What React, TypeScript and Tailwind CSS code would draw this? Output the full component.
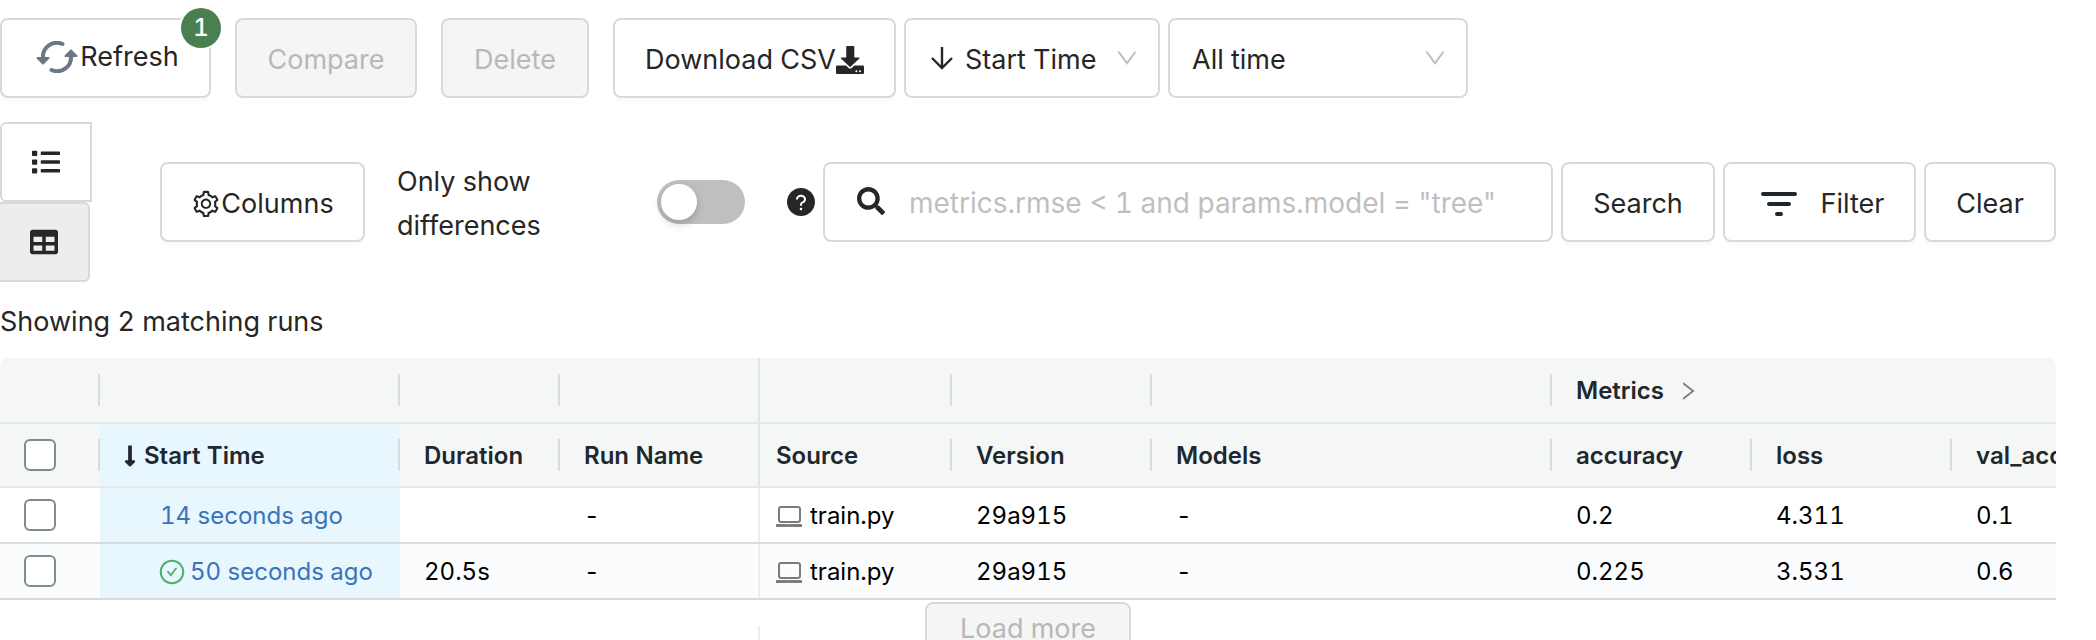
import React from "react";
import { FaList, FaTable, FaSearch, FaLongArrowAltDown } from "react-icons/fa";
import { AiOutlineSetting, AiOutlineDown, AiOutlineRight, AiOutlineCheckCircle, AiFillQuestionCircle } from "react-icons/ai";

const buttonBase = "shrink-0 rounded-lg border-2 border-[#d9d9d9] flex items-center whitespace-nowrap";
const buttonActive = "h-20 justify-center pt-1 bg-white shadow-[0_4px_0_rgba(0,0,0,0.016)]";
const buttonDisabled = "justify-center pt-1 bg-[#f5f5f5] text-[#b8b8b8]";

function RefreshIcon() {
  return (
    <svg viewBox="-1 0 42 32" className="h-8 w-[42px]" fill="none" stroke="#6b7785" strokeWidth="4" strokeLinecap="round" strokeLinejoin="round" aria-hidden="true">
      <path d="M25.500 3 A14 14 0 0 0 6 17" />
      <path d="M14.500 29 A14 14 0 0 0 34 15" />
      <path d="M0.500 17h11l-5.500 5.500z M28.500 15h11l-5.500 -5.500z" fill="#6b7785" strokeWidth="2" />
    </svg>
  );
}

function DownloadIcon() {
  return (
    <svg viewBox="0 0 28 28" className="size-7" fill="currentColor" aria-hidden="true">
      <path d="M11 0h6.500a0.800 0.800 0 0 1 0.800 0.800V11.500h4.700a0.600 0.600 0 0 1 0.400 1L14.600 20.700a0.600 0.600 0 0 1-0.900 0L5 12.500a0.600 0.600 0 0 1 0.400-1h4.800V0.800A0.800 0.800 0 0 1 11 0z" />
      <path d="M1.300 19.600h8.700l2.600 2.500a2.200 2.200 0 0 0 3.100 0l2.600-2.500h8.400a1.300 1.300 0 0 1 1.300 1.300v5.800a1.300 1.300 0 0 1-1.300 1.300H1.300A1.300 1.300 0 0 1 0 26.700v-5.800a1.300 1.300 0 0 1 1.300-1.300z" />
      <circle cx="20.400" cy="25.200" r="1" fill="#fff" />
      <circle cx="24" cy="25.200" r="1" fill="#fff" />
    </svg>
  );
}

function SortArrow() {
  return (
    <svg viewBox="0 0 22 24" className="h-6 w-[22px]" fill="none" stroke="currentColor" strokeWidth="2.400" aria-hidden="true">
      <path d="M11 1v21M1 12l10 10 10-10" />
    </svg>
  );
}

function LaptopIcon() {
  return (
    <svg viewBox="0 0 26 22" className="h-[22px] w-[26px]" fill="none" stroke="#7b7b7b" strokeWidth="2" aria-hidden="true">
      <rect x="3" y="1" width="21" height="15" rx="2" />
      <path d="M1 19.500h24" strokeWidth="3" strokeLinecap="round" />
      <path d="M11.500 19h3" stroke="#999" strokeWidth="1" />
    </svg>
  );
}

function FilterIcon() {
  return (
    <svg viewBox="0 0 36 24" className="h-6 w-9" fill="none" stroke="#1f272d" strokeWidth="4" strokeLinecap="round" aria-hidden="true">
      <path d="M2 2h32M8 12h20M16 22h4" />
    </svg>
  );
}

function Toolbar() {
  return (
    <div className="flex items-start pt-[18px]">
      <button className={`${buttonBase} relative mr-6 h-20 w-[211px] justify-center bg-white pb-0.5 pl-1 shadow-[0_4px_0_rgba(0,0,0,0.016)]`}>
        <RefreshIcon />
        <span className="ml-0.5">Refresh</span>
        <span className="absolute -top-3 -right-3 flex size-10 items-center justify-center rounded-full bg-[#4a7f52] text-2xl font-medium text-white shadow-[0_0_0_2px_#fff]">1</span>
      </button>
      <button disabled className={`${buttonBase} ${buttonDisabled} mr-6 h-20 w-[182px]`}>Compare</button>
      <button disabled className={`${buttonBase} ${buttonDisabled} mr-6 h-20 w-[148px]`}>Delete</button>
      <button className={`${buttonBase} ${buttonActive} mr-2 w-[283px]`}>
        Download CSV
        <DownloadIcon />
      </button>
      <button aria-haspopup="listbox" className={`${buttonBase} mr-2 h-20 w-[256px] bg-white pr-[18px] pl-[25px]`}>
        <SortArrow />
        <span className="ml-3 flex-1 pt-1 text-left">Start Time</span>
        <AiOutlineDown className="size-[26px] text-[#bfbfbf]" />
      </button>
      <button aria-haspopup="listbox" className={`${buttonBase} h-20 w-[300px] bg-white pr-[18px] pl-[22px]`}>
        <span className="flex-1 pt-1 text-left">All time</span>
        <AiOutlineDown className="size-[26px] text-[#bfbfbf]" />
      </button>
    </div>
  );
}

function SearchRow() {
  return (
    <div className="mt-6 flex items-center">
      <div className="mr-[68px] flex w-[92px] shrink-0 flex-col items-start">
        <button aria-label="List view" className="flex h-20 w-full items-center justify-center rounded-l-md border-2 border-[#d9d9d9] bg-white">
          <FaList className="size-7" />
        </button>
        <button aria-label="Table view" className="flex h-20 w-[90px] items-center justify-center rounded-r-md border-2 border-l-0 border-[#d9d9d9] bg-[#ededed]">
          <FaTable className="size-7" />
        </button>
      </div>
      <button className={`${buttonBase} ${buttonActive} mr-8 w-[205px]`}>
        <AiOutlineSetting className="size-[30px]" />
        Columns
      </button>
      <label htmlFor="differences" className="mr-[60px] w-[200px] shrink-0 pt-1 leading-[44px]">
        Only show
        <br />
        differences
      </label>
      <input
        id="differences"
        type="checkbox"
        role="switch"
        className="mr-10 h-11 w-[88px] shrink-0 appearance-none rounded-full bg-[#bfbfbf] p-1 before:block before:size-9 before:rounded-full before:bg-white before:shadow-[0_4px_8px_rgba(0,35,11,0.2)] checked:bg-[#2272b4] checked:before:ml-11"
      />
      <AiFillQuestionCircle className="mr-1.5 size-8 shrink-0" />
      <div className="mr-2 flex h-20 min-w-0 flex-1 items-center rounded-lg border-2 border-[#d9d9d9] px-8 pb-0.5">
        <FaSearch className="mr-6 size-7 shrink-0" />
        <input
          aria-label="Search runs"
          placeholder={'metrics.rmse < 1 and params.model = "tree"'}
          className="min-w-0 flex-1 bg-transparent pt-1 text-[28px] outline-none placeholder:text-[#bfbfbf]"
        />
      </div>
      <button className={`${buttonBase} ${buttonActive} mr-2 w-[154px]`}>Search</button>
      <button className={`${buttonBase} ${buttonActive} mr-2 w-[193px] pl-1.5`}>
        <FilterIcon />
        <span className="ml-6">Filter</span>
      </button>
      <button className={`${buttonBase} ${buttonActive} w-[132px]`}>Clear</button>
    </div>
  );
}

const columns = [
  { key: "start", label: "Start Time" },
  { key: "duration", label: "Duration" },
  { key: "name", label: "Run Name" },
  { key: "source", label: "Source" },
  { key: "version", label: "Version" },
  { key: "models", label: "Models" },
  { key: "accuracy", label: "accuracy" },
  { key: "loss", label: "loss" },
  { key: "val", label: "val_accuracy" },
];

const runs = [
  { start: "14 seconds ago", done: false, duration: "", name: "-", source: "train.py", version: "29a915", models: "-", accuracy: "0.2", loss: "4.311", val: "0.1" },
  { start: "50 seconds ago", done: true, duration: "20.5s", name: "-", source: "train.py", version: "29a915", models: "-", accuracy: "0.225", loss: "3.531", val: "0.6" },
];

const checkbox = "block size-8 appearance-none rounded-md border-2 border-[#7f8c8d] bg-white checked:bg-[#2272b4]";

function HeaderCell({ label, divider = "short", sorted = false, chevron = false }: { label?: string; divider?: "short" | "full" | "none"; sorted?: boolean; chevron?: boolean }) {
  const edge = divider === "full" ? "border-r-2 border-[#e2e6e6]" : "";
  return (
    <div className={`flex h-full items-center ${edge}`}>
      <span className="flex flex-1 items-center pt-0.5">
        {sorted && <FaLongArrowAltDown className="mr-0.5 -ml-1.5 size-6" />}
        {label}
        {chevron && <AiOutlineRight className="ml-3 size-6 text-[#7b7b7b]" />}
      </span>
      {divider === "short" && <span className="h-8 w-0.5 bg-[#d9dcde]" />}
    </div>
  );
}

function RunsTable() {
  return (
    <div className="mt-[14px] overflow-hidden rounded-t-lg text-2xl">
      <table className="w-[2152px] table-fixed border-separate border-spacing-0 text-left">
        <colgroup>
          <col className="w-[100px]" />
          <col className="w-[300px]" />
          <col className="w-40" />
          <col className="w-[200px]" />
          <col className="w-48" />
          <col className="w-[200px]" />
          <col className="w-[400px]" />
          <col className="w-[200px]" />
          <col className="w-[200px]" />
          <col className="w-[200px]" />
        </colgroup>
        <thead className="bg-[#f5f7f7] text-[#20272e]">
          <tr className="h-[66px]">
            {[0, 1, 2, 3, 4, 5, 6].map((i) => (
              <td key={i} className="h-[66px] border-b-2 border-[#e6e9e9] p-0">
                <HeaderCell divider={i === 3 ? "full" : "short"} />
              </td>
            ))}
            <th colSpan={3} className="h-[66px] border-b-2 border-[#e6e9e9] p-0 pl-6 font-semibold">
              <HeaderCell label="Metrics" divider="none" chevron />
            </th>
          </tr>
          <tr>
            <th className="h-16 border-b-2 border-[#e6e9e9] p-0 pl-6">
              <div className="flex h-full items-center justify-between">
                <input type="checkbox" aria-label="Select all runs" className={checkbox} />
                <span className="h-8 w-0.5 bg-[#d9dcde]" />
              </div>
            </th>
            {columns.map((c) => (
              <th
                key={c.key}
                className={`h-16 border-b-2 border-[#e6e9e9] p-0 font-semibold ${c.key === "source" ? "pl-4" : "pl-6"} ${c.key === "start" ? "bg-[#e8f6fe]" : ""}`}
              >
                <HeaderCell label={c.label} sorted={c.key === "start"} divider={c.key === "name" ? "full" : "short"} />
              </th>
            ))}
          </tr>
        </thead>
        <tbody className="text-black">
          {runs.map((run) => {
            const frame = "h-14 border-b-2 border-[#d9dcde] p-0 whitespace-nowrap";
            const cell = `${frame} pt-0.5 pl-6`;
            return (
              <tr key={run.start} className="even:bg-[#fbfcfe]">
                <td className={`${frame} pl-6`}>
                  <input type="checkbox" aria-label={`Select run from ${run.start}`} className={checkbox} />
                </td>
                <td className={`${cell} bg-[#e8f6fe]`}>
                  <a href="#run" className={`flex items-center text-[#3b73b9] ${run.done ? "pl-[34px]" : "pl-9"}`}>
                    {run.done && <AiOutlineCheckCircle className="mr-1 size-7 text-[#4caf6e]" />}
                    {run.start}
                  </a>
                </td>
                <td className={cell}>{run.duration}</td>
                <td className={`${frame} pl-6`}>
                  <div className="flex h-full items-center border-r-2 border-[#eceeee] pt-0.5">{run.name}</div>
                </td>
                <td className={`${frame} pt-0.5 pl-4`}>
                  <div className="flex items-center gap-2">
                    <span className="pt-0.5">
                      <LaptopIcon />
                    </span>
                    {run.source}
                  </div>
                </td>
                <td className={cell}>{run.version}</td>
                <td className={cell}>{run.models}</td>
                <td className={cell}>{run.accuracy}</td>
                <td className={cell}>{run.loss}</td>
                <td className={cell}>{run.val}</td>
              </tr>
            );
          })}
        </tbody>
      </table>
    </div>
  );
}

export default function App() {
  return (
    <main className="h-screen overflow-hidden bg-white pr-10 font-['Inter',sans-serif] text-[27px] leading-[44px] text-[#262626] tabular-nums">
      <Toolbar />
      <SearchRow />
      <p className="mt-[18px]">Showing 2 matching runs</p>
      <RunsTable />
      <div className="grid">
        <div className="col-start-1 row-start-1 mt-[26px] w-[760px] border-r-2 border-[#eceeee]" />
        <button disabled className={`${buttonBase} ${buttonDisabled} col-start-1 row-start-1 mt-0.5 h-[50px] w-[206px] justify-self-center`}>Load more</button>
      </div>
    </main>
  );
}
